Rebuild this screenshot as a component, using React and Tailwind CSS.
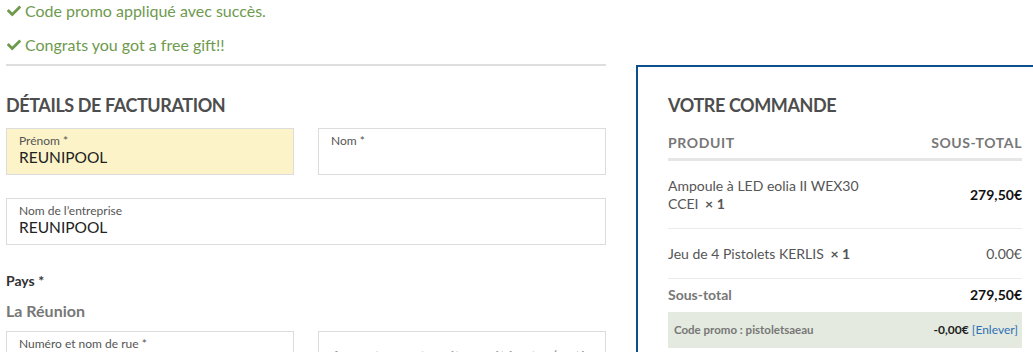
import React from 'react';
import { FaCheck } from 'react-icons/fa';

function Field({ label, value, className = '', bg = 'bg-white', placeholder }) {
  return (
    <div className={`h-[47px] border border-[#dcdcdc] px-[12px] pt-[5px] ${bg} ${className}`}>
      {label && <div className="text-[12px] leading-[14px] text-[#555]">{label}</div>}
      {value && <div className="text-[15.5px] leading-[18px] text-[#222]">{value}</div>}
      {placeholder && (
        <div className="pt-[9px] text-[16px] leading-[20px] tracking-[0.2px] whitespace-nowrap text-[#999]">
          {placeholder}
        </div>
      )}
    </div>
  );
}

function Notice({ children, className = '' }) {
  return (
    <div className={`flex h-[22px] items-center gap-[4px] text-[16px] text-[#6e9a4e] ${className}`}>
      <FaCheck className="ml-[1px] h-[14px] w-[14px]" />
      <span>{children}</span>
    </div>
  );
}

export default function App() {
  return (
    <div className="flex h-[352px] w-[1033px] overflow-hidden bg-white font-['Lato','Open_Sans',sans-serif]">
      {/* billing column */}
      <div className="ml-[6px] w-[600px] shrink-0">
        <Notice>Code promo appliqué avec succès.</Notice>
        <Notice className="mt-[12px]">Congrats you got a free gift!!</Notice>
        <div className="mt-[8px] h-[2px] bg-[#dedede]" />

        <h3 className="mt-[27px] text-[18px] leading-[24px] font-bold uppercase tracking-[-0.4px] text-[#4d4d4d]">
          Détails de facturation
        </h3>

        <div className="mt-[11px] flex gap-[24px]">
          <Field className="w-[288px]" bg="bg-[#fcf3c8]" label="Prénom *" value="REUNIPOOL" />
          <Field className="w-[288px]" label="Nom *" />
        </div>

        <div className="mt-[23px]">
          <Field label="Nom de l’entreprise" value="REUNIPOOL" />
        </div>

        <div className="mt-[27px] text-[14px] leading-[18px] font-bold text-[#333]">Pays *</div>
        <div className="mt-[10px] text-[16px] leading-[22px] font-bold text-[#777]">La Réunion</div>

        <div className="mt-[9px] flex gap-[24px]">
          <Field className="w-[288px]" label="Numéro et nom de rue *" />
          <Field className="w-[288px] overflow-hidden" placeholder="Appartement, suite, unité, etc. (optionnel)" />
        </div>
      </div>

      {/* order summary */}
      <div className="ml-[30px] mt-[65px] h-[400px] w-[418px] shrink-0 border-2 border-[#0d4e8c] px-[30px] pt-[26px]">
        <h3 className="text-[18px] leading-[24px] font-bold uppercase tracking-[-0.4px] text-[#4d4d4d]">
          Votre commande
        </h3>

        <div className="mt-[17px] flex justify-between border-b-[3px] border-[#e6e6e6] pb-[6px] text-[14px] leading-[18px] font-bold uppercase tracking-[0.6px] text-[#777]">
          <span>Produit</span>
          <span>Sous-total</span>
        </div>

        <div className="flex items-center justify-between border-b border-[#ebebeb] pt-[16px] pb-[15px] text-[14px] leading-[18px]">
          <div className="w-[215px] text-[#555]">
            Ampoule à LED eolia II WEX30 CCEI <span className="ml-[3px] font-bold">× 1</span>
          </div>
          <div className="font-bold text-[#111]">279,50€</div>
        </div>

        <div className="flex items-center justify-between border-b border-[#ebebeb] pt-[16px] pb-[15px] text-[14px] leading-[18px]">
          <div className="text-[#555]">
            Jeu de 4 Pistolets KERLIS <span className="ml-[3px] font-bold">× 1</span>
          </div>
          <div className="text-[#555]">0.00€</div>
        </div>

        <div className="flex justify-between pt-[7px] pb-[8px] text-[14px] leading-[18px] font-bold">
          <span className="text-[#777]">Sous-total</span>
          <span className="text-[#111]">279,50€</span>
        </div>

        <div className="flex h-[36px] items-center justify-between bg-[#e4eadf] pr-[4px] pl-[6px] text-[12px]">
          <span className="text-[11.5px] font-bold text-[#777]">Code promo : pistoletsaeau</span>
          <span>
            <span className="font-bold text-[#222]">-0,00€</span>{' '}
            <span className="text-[#2f6fb5]">[Enlever]</span>
          </span>
        </div>
      </div>
    </div>
  );
}
